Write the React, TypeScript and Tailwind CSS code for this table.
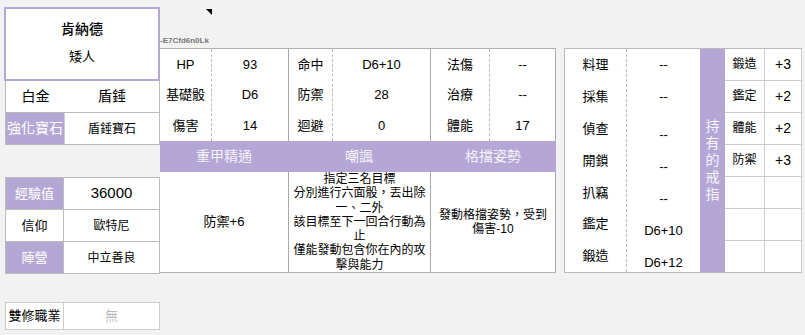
import React from "react";

const purple = "bg-[#b4a7d6]";

function StatColumn({ items, className }: { items: string[]; className: string }) {
  return (
    <div className={`flex flex-col ${className}`}>
      {items.map((t, i) => (
        <div key={i} className="flex-1 flex items-center justify-center">
          {t}
        </div>
      ))}
    </div>
  );
}

const skills: { label: string; value: string; drop: boolean }[] = [
  { label: "料理", value: "--", drop: false },
  { label: "採集", value: "--", drop: false },
  { label: "偵查", value: "--", drop: true },
  { label: "開鎖", value: "--", drop: true },
  { label: "扒竊", value: "--", drop: true },
  { label: "鑑定", value: "D6+10", drop: true },
  { label: "鍛造", value: "D6+12", drop: true },
];

const rings: [string, string][] = [
  ["鍛造", "+3"],
  ["鑑定", "+2"],
  ["體能", "+2"],
  ["防禦", "+3"],
  ["", ""],
  ["", ""],
  ["", ""],
];

export default function App() {
  return (
    <div className="w-[805px] h-[335px] bg-[#f2f2f2] text-black overflow-hidden font-['Liberation_Sans','Noto_Sans_CJK_TC',sans-serif]">
      <div className="flex pl-[4px] pt-[7px]">
        {/* character card column */}
        <div className="w-[156px] flex flex-col">
          <div className="h-[74px] border-2 border-[#b4a7d6] bg-white flex flex-col items-center">
            <div className="mt-[11px] h-[18px] leading-[18px] text-[14px] font-medium">肯納德</div>
            <div className="mt-[10px] h-[18px] leading-[18px] text-[13px]">矮人</div>
          </div>
          <div className="ml-[1px] w-[155px] border-x border-b border-[#bbbbbb] bg-white text-[14px]">
            <div className="h-[32px] flex border-b border-[#bbbbbb]">
              <div className="w-[59px] flex items-center justify-center">白金</div>
              <div className="flex-1 flex items-center justify-center">盾錘</div>
            </div>
            <div className="h-[31px] flex">
              <div className={`w-[59px] ${purple} text-white flex items-center justify-center border-r border-[#d0d0d0]`}>強化寶石</div>
              <div className="flex-1 flex items-center justify-center text-[12px]">盾錘寶石</div>
            </div>
          </div>
          <div className="h-[32px]" />
          <div className="ml-[1px] w-[155px] border border-[#bbbbbb] bg-white text-[13px]">
            <div className="h-[31px] flex">
              <div className={`w-[58px] ${purple} text-white flex items-center justify-center border-r border-[#bbbbbb]`}>經驗值</div>
              <div className="flex-1 flex items-center justify-center text-[15px]">36000</div>
            </div>
            <div className="h-[32px] flex border-t border-[#bbbbbb]">
              <div className="w-[58px] flex items-center justify-center border-r border-[#bbbbbb]">信仰</div>
              <div className="flex-1 flex items-center justify-center text-[12px]">歐特尼</div>
            </div>
            <div className="h-[32px] flex border-t border-[#bbbbbb]">
              <div className={`w-[58px] ${purple} text-white flex items-center justify-center border-r border-[#bbbbbb]`}>陣營</div>
              <div className="flex-1 flex items-center justify-center text-[12px]">中立善良</div>
            </div>
          </div>
          <div className="h-[28px]" />
          <div className="ml-[1px] w-[155px] h-[28px] border border-[#cccccc] bg-white flex text-[13px]">
            <div className="w-[58px] flex items-center justify-center border-r border-[#cccccc]">雙修職業</div>
            <div className="flex-1 flex items-center justify-center text-[#bbbbbb]">無</div>
          </div>
        </div>

        {/* stats area */}
        <div className="flex flex-col">
          <div className="h-[41px] relative flex items-end pb-[3px]">
            <svg className="absolute left-[46px] top-[2px]" width="6" height="6" viewBox="0 0 6 6">
              <polygon points="0,0 6,0 6,6" fill="#000" />
            </svg>
            <span className="text-[8px] leading-[9px] text-[#777777] font-semibold">-E7Cfd6n0Lk</span>
          </div>
          <div className="flex">
            {/* combat table */}
            <div className="w-[396px] h-[225px] border-y border-[#b0b0b0] flex flex-col text-[13px]">
              <div className="h-[96px] flex bg-white">
                <div className="w-[128px] flex">
                  <StatColumn items={["HP", "基礎骰", "傷害"]} className="w-[52px] border-r border-dashed border-[#bbbbbb]" />
                  <StatColumn items={["93", "D6", "14"]} className="flex-1" />
                </div>
                <div className="w-[142px] flex border-l border-[#a8a8a8]">
                  <StatColumn items={["命中", "防禦", "迴避"]} className="w-[44px] border-r border-dashed border-[#bbbbbb]" />
                  <StatColumn items={["D6+10", "28", "0"]} className="flex-1" />
                </div>
                <div className="flex-1 flex border-x border-[#a8a8a8]">
                  <StatColumn items={["法傷", "治療", "體能"]} className="w-[59px] border-r border-dashed border-[#bbbbbb]" />
                  <StatColumn items={["--", "--", "17"]} className="flex-1" />
                </div>
              </div>
              <div className={`h-[32px] flex ${purple} text-[#f4f2f8] text-[14px] relative z-10`}>
                <div className="w-[128px] flex items-center justify-center">重甲精通</div>
                <div className="w-[142px] flex items-center justify-center">嘲諷</div>
                <div className="flex-1 flex items-center justify-center">格擋姿勢</div>
              </div>
              <div className="flex-1 flex bg-white">
                <div className="w-[128px] flex items-center justify-center">防禦+6</div>
                <div className="w-[142px] flex items-center justify-center border-l border-[#a8a8a8] px-[2px] text-center text-[12px] leading-[14.3px]">
                  <div>
                    指定三名目標
                    <br />
                    分別進行六面骰，丟出除一、二外
                    <br />
                    該目標至下一回合行動為止
                    <br />
                    僅能發動包含你在內的攻擊與能力
                  </div>
                </div>
                <div className="flex-1 flex items-center justify-center border-x border-[#a8a8a8] px-[4px] text-center text-[12px] leading-[14px]">
                  <div>發動格擋姿勢，受到傷害-10</div>
                </div>
              </div>
            </div>

            {/* skills and rings */}
            <div className="ml-[8px] h-[225px] border-y border-[#bbbbbb] flex bg-white text-[13px]">
              <div className="w-[62px] flex flex-col border-l border-[#bbbbbb]">
                {skills.map((s) => (
                  <div key={s.label} className="flex-1 flex items-center justify-center">
                    {s.label}
                  </div>
                ))}
              </div>
              <div className="w-[74px] flex flex-col border-l border-dashed border-[#bbbbbb] overflow-hidden">
                {skills.map((s) => (
                  <div
                    key={s.label}
                    className={`h-[32px] shrink-0 flex items-center justify-center ${s.drop ? "pt-[12px]" : ""}`}
                  >
                    {s.value}
                  </div>
                ))}
              </div>
              <div className={`w-[25px] ${purple} text-[#f7f5fb] text-[14px] leading-[17px] flex flex-col items-center justify-center`}>
                {"持有的戒指".split("").map((c, i) => (
                  <span key={i}>{c}</span>
                ))}
              </div>
              <div className="w-[77px] flex flex-col border-r border-[#cccccc]">
                {rings.map(([k, v], i) => (
                  <div key={i} className={`flex-1 flex ${i < rings.length - 1 ? "border-b border-[#cccccc]" : ""}`}>
                    <div className="w-[40px] border-r border-[#cccccc] flex items-center justify-center text-[12px] pb-[2px]">{k}</div>
                    <div className="flex-1 flex items-center justify-center text-[14px]">{v}</div>
                  </div>
                ))}
              </div>
            </div>
          </div>
        </div>
      </div>
    </div>
  );
}
